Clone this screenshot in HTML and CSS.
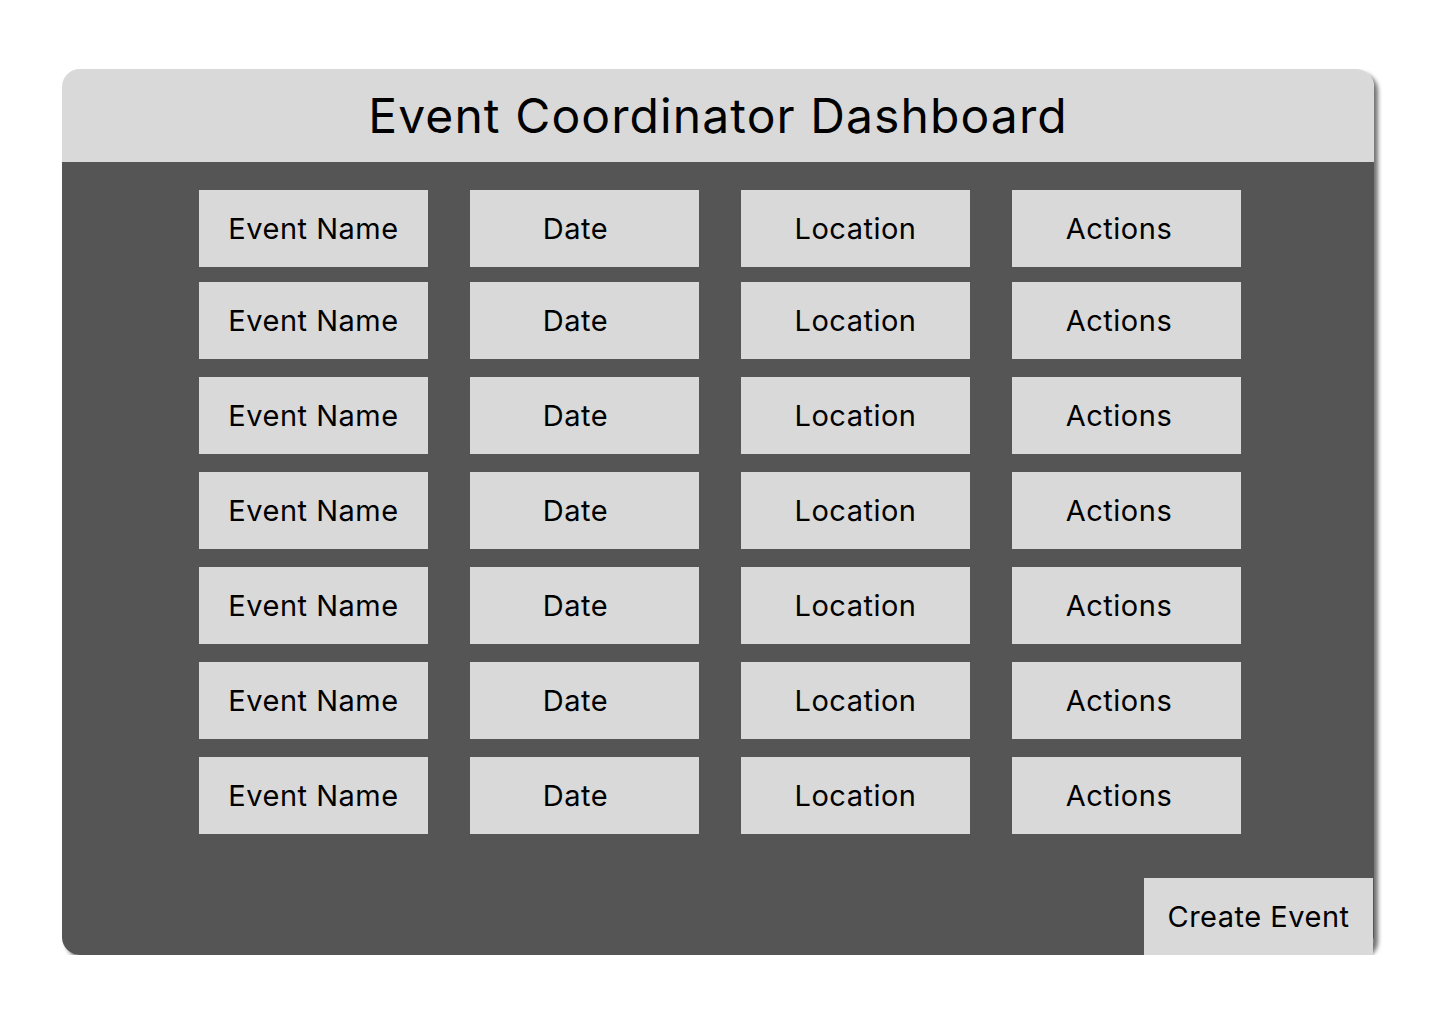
FILE: index.html
```html
<!DOCTYPE html>
<html lang="en">
<head>
    <meta charset="UTF-8">
    <title>Event Coordinator Dashboard</title>
    <link rel="stylesheet" href="styles.css">
</head>
<body>
    <div class="dashboard">
        <div class="dashboard-header">
            <h1>Event Coordinator Dashboard</h1>
        </div>

        <div class="dashboard-body">
            <!-- Events table -->
            <div class="event-table">
                <div class="event-row header-row">
                    <div class="cell col-name">Event Name</div>
                    <div class="cell col-date">Date</div>
                    <div class="cell col-location">Location</div>
                    <div class="cell col-actions">Actions</div>
                </div>
                <div class="event-row">
                    <div class="cell col-name">Event Name</div>
                    <div class="cell col-date">Date</div>
                    <div class="cell col-location">Location</div>
                    <div class="cell col-actions">Actions</div>
                </div>
                <div class="event-row">
                    <div class="cell col-name">Event Name</div>
                    <div class="cell col-date">Date</div>
                    <div class="cell col-location">Location</div>
                    <div class="cell col-actions">Actions</div>
                </div>
                <div class="event-row">
                    <div class="cell col-name">Event Name</div>
                    <div class="cell col-date">Date</div>
                    <div class="cell col-location">Location</div>
                    <div class="cell col-actions">Actions</div>
                </div>
                <div class="event-row">
                    <div class="cell col-name">Event Name</div>
                    <div class="cell col-date">Date</div>
                    <div class="cell col-location">Location</div>
                    <div class="cell col-actions">Actions</div>
                </div>
                <div class="event-row">
                    <div class="cell col-name">Event Name</div>
                    <div class="cell col-date">Date</div>
                    <div class="cell col-location">Location</div>
                    <div class="cell col-actions">Actions</div>
                </div>
                <div class="event-row">
                    <div class="cell col-name">Event Name</div>
                    <div class="cell col-date">Date</div>
                    <div class="cell col-location">Location</div>
                    <div class="cell col-actions">Actions</div>
                </div>
            </div>

            <button class="create-btn">Create Event</button>
        </div>
    </div>
</body>
</html>
```

FILE: styles.css
```css
body {
    font-family: Inter, "Noto Sans", sans-serif;
    margin: 0;
    background-color: #ffffff;
}
.dashboard {
    width: 1312px;
    height: 886px;
    margin: 69px 0 0 62px;
    display: flex;
    flex-direction: column;
    border-radius: 18px;
    box-shadow: 4px 4px 4px rgba(0, 0, 0, 0.55);
}
.dashboard-header {
    height: 93px;
    background-color: #d9d9d9;
    border-radius: 18px 18px 0 0;
    display: flex;
    align-items: center;
    justify-content: center;
}
.dashboard-header h1 {
    margin: 0;
    font-size: 48px;
    font-weight: 400;
    letter-spacing: 1.1px;
    color: #000;
}
.dashboard-body {
    flex: 1;
    background-color: #555555;
    border-radius: 0 0 18px 18px;
    display: flex;
    flex-direction: column;
    padding-top: 28px;
}
.event-table {
    display: flex;
    flex-direction: column;
    gap: 18px;
    padding-left: 137px;
}
.event-row {
    display: flex;
    gap: 42px;
}
.header-row {
    margin-bottom: -3px;
}
.cell {
    width: 229px;
    height: 77px;
    background-color: #d9d9d9;
    display: flex;
    align-items: center;
    justify-content: center;
    font-size: 29px;
    letter-spacing: 0.5px;
    color: #000;
    box-sizing: border-box;
}
.col-date {
    padding-right: 18px;
}
.col-actions {
    padding-right: 15px;
}
.create-btn {
    margin-top: auto;
    margin-right: 1px;
    align-self: flex-end;
    width: 229px;
    height: 77px;
    border: none;
    background-color: #d9d9d9;
    font-family: inherit;
    font-size: 29px;
    letter-spacing: 0.5px;
    color: #000;
    padding: 0;
    cursor: pointer;
}
```
